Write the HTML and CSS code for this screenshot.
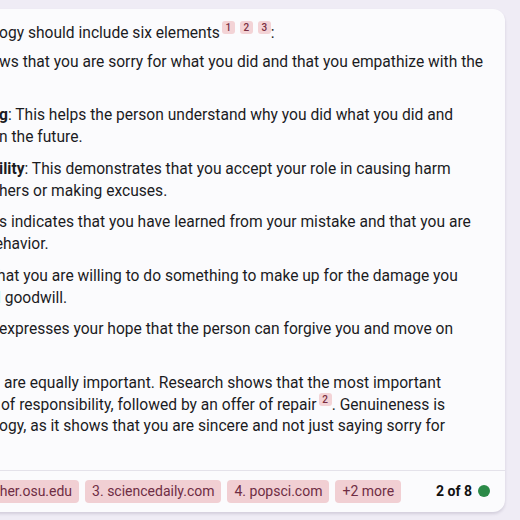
FILE: index.html
```html
<!DOCTYPE html>
<html lang="en">
<head>
<meta charset="utf-8">
<title>Apology answer</title>
<link rel="stylesheet" href="styles.css">
</head>
<body>
<main class="page">
  <article class="card">
    <div class="content">
      <p class="para">
        <span class="ln">ogy should include six elements<sup class="cite">1</sup><sup class="cite">2</sup><sup class="cite">3</sup>:</span>
      </p>
      <ol class="list">
        <li class="item">
          <span class="ln">ws that you are sorry for what you did and that you empathize with the</span>
          <span class="ln">&nbsp;</span>
        </li>
        <li class="item">
          <span class="ln"><strong>g</strong>: This helps the person understand why you did what you did and</span>
          <span class="ln">n the future.</span>
        </li>
        <li class="item">
          <span class="ln"><strong>ility</strong>: This demonstrates that you accept your role in causing harm</span>
          <span class="ln">hers or making excuses.</span>
        </li>
        <li class="item">
          <span class="ln">s indicates that you have learned from your mistake and that you are</span>
          <span class="ln cut-e">behavior.</span>
        </li>
        <li class="item">
          <span class="ln cut-t">that you are willing to do something to make up for the damage you</span>
          <span class="ln cut-d">d goodwill.</span>
        </li>
        <li class="item">
          <span class="ln">expresses your hope that the person can forgive you and move on</span>
          <span class="ln">&nbsp;</span>
        </li>
      </ol>
      <p class="para">
        <span class="ln cut-s">s are equally important. Research shows that the most important</span>
        <span class="ln cut-t2">t of responsibility, followed by an offer of repair<sup class="cite">2</sup>. Genuineness is</span>
        <span class="ln">ogy, as it shows that you are sincere and not just saying sorry for</span>
        <span class="ln">&nbsp;</span>
      </p>
    </div>
    <footer class="footer">
      <div class="chips">
        <span class="chip">2. researcher.osu.edu</span>
        <span class="chip">3. sciencedaily.com</span>
        <span class="chip">4. popsci.com</span>
        <span class="chip">+2 more</span>
      </div>
      <div class="status">
        <span class="count">2 of 8</span>
        <span class="dot"></span>
      </div>
    </footer>
  </article>
</main>
</body>
</html>
```
FILE: styles.css
```css
html, body {
  margin: 0;
  padding: 0;
}
body {
  background: #efecf5;
  font-family: Roboto, "Liberation Sans", sans-serif;
  color: #1b1b1f;
  overflow: hidden;
  width: 520px;
  height: 520px;
}
.page {
  padding-top: 9px;
}
.card {
  margin-left: -61px;
  width: 566px;
  background: #fbfbfd;
  border-radius: 12px;
  box-shadow: 0 2px 3px rgba(40, 30, 70, 0.14);
  overflow: hidden;
}
.content {
  padding: 14px 16px 0 60px;
  font-size: 15.6px;
  line-height: 21.75px;
}
.para {
  margin: 0;
}
.list {
  list-style: none;
  margin: 7px 0 0;
  padding: 0;
}
.item {
  margin-bottom: 10px;
}
.ln {
  display: block;
  white-space: nowrap;
}
.cut-e { margin-left: -13px; }
.cut-t { margin-left: -7px; }
.cut-d { margin-left: -7px; }
.cut-s { margin-left: -7px; }
.cut-t2 { margin-left: -7px; }
strong {
  font-weight: 700;
}
.cite {
  display: inline-block;
  font-size: 10px;
  line-height: 13px;
  height: 13px;
  min-width: 13px;
  padding: 0 1px;
  box-sizing: border-box;
  text-align: center;
  background: #f3d3d6;
  color: #7a2f42;
  border-radius: 3px;
  vertical-align: baseline;
  position: relative;
  top: -7px;
  margin-left: 2px;
  font-weight: 500;
}
.cite + .cite {
  margin-left: 5px;
}
.footer {
  border-top: 1px solid #e4e2ea;
  margin-top: 10px;
  padding: 9px 15px 9px 0;
  display: flex;
  justify-content: flex-end;
  align-items: center;
  gap: 35px;
}
.chips {
  display: flex;
  gap: 6px;
  white-space: nowrap;
  flex-shrink: 0;
}
.chip {
  background: #f1cfd3;
  color: #6f2d44;
  font-size: 14px;
  line-height: 23px;
  height: 23px;
  padding: 0 7px;
  border-radius: 4px;
  flex-shrink: 0;
}
.status {
  display: flex;
  align-items: center;
  gap: 6px;
  flex-shrink: 0;
  white-space: nowrap;
}
.count {
  font-size: 14px;
  font-weight: 700;
  color: #111;
}
.dot {
  width: 12px;
  height: 12px;
  border-radius: 50%;
  background: #2b8a48;
}
```
